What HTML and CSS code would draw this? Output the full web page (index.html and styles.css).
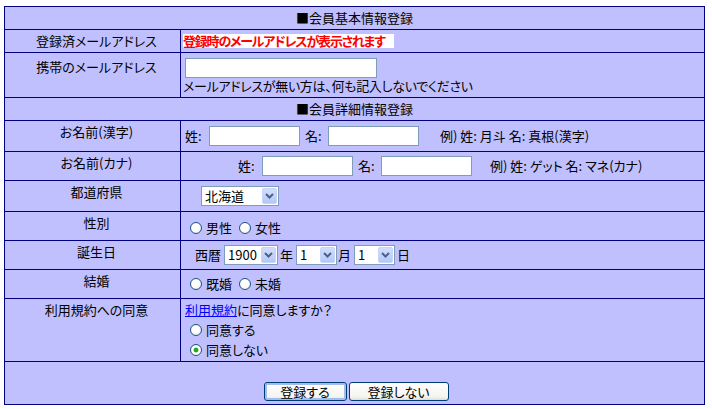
FILE: index.html
```html
<!DOCTYPE html>
<html lang="ja">
<head>
<meta charset="utf-8">
<title>会員登録</title>
<link rel="stylesheet" href="styles.css">
</head>
<body>
<form class="page">
<table class="form">
  <tr class="h23">
    <td colspan="2" class="head">■会員基本情報登録</td>
  </tr>
  <tr class="h23">
    <td class="lbl">登録済メールアドレス</td>
    <td class="val"><span class="reg-mail">登録時のメールアドレスが表示されます</span></td>
  </tr>
  <tr class="h45">
    <td class="lbl lbl-low">携帯のメールアドレス</td>
    <td class="val val-top">
      <input class="txt txt-mail" type="text">
      <div class="note">メールアドレスが無い方は、何も記入しないでください</div>
    </td>
  </tr>
  <tr class="h23">
    <td colspan="2" class="head">■会員詳細情報登録</td>
  </tr>
  <tr class="h31">
    <td class="lbl">お名前(漢字)</td>
    <td class="val">
      <div class="line kanji">
        <span class="nm">姓:</span><input class="txt txt-name" type="text">
        <span class="nm nm2">名:</span><input class="txt txt-name" type="text">
        <span class="ex ex-kanji">例) 姓: 月斗 名: 真根(漢字)</span>
      </div>
    </td>
  </tr>
  <tr class="h29">
    <td class="lbl">お名前(カナ)</td>
    <td class="val">
      <div class="line kana">
        <span class="nm">姓:</span><input class="txt txt-name" type="text">
        <span class="nm nm2">名:</span><input class="txt txt-name" type="text">
        <span class="ex ex-kana">例) 姓: ゲット 名: マネ(カナ)</span>
      </div>
    </td>
  </tr>
  <tr class="h31">
    <td class="lbl">都道府県</td>
    <td class="val">
      <div class="line">
        <span class="sel sel-pref"><select><option>北海道</option></select><span class="sel-btn"><svg width="9" height="6" viewBox="0 0 9 6"><path d="M1 1 L4.5 4.5 L8 1" fill="none" stroke="#4d6185" stroke-width="2"/></svg></span></span>
      </div>
    </td>
  </tr>
  <tr class="h29">
    <td class="lbl">性別</td>
    <td class="val val-low">
      <div class="line choice">
        <label class="opt"><input type="radio" name="sex">男性</label>
        <label class="opt"><input type="radio" name="sex">女性</label>
      </div>
    </td>
  </tr>
  <tr class="h29">
    <td class="lbl">誕生日</td>
    <td class="val">
      <div class="line birth">
        <span class="era">西暦</span>
        <span class="sel sel-year"><select><option>1900</option></select><span class="sel-btn"><svg width="9" height="6" viewBox="0 0 9 6"><path d="M1 1 L4.5 4.5 L8 1" fill="none" stroke="#4d6185" stroke-width="2"/></svg></span></span>
        <span class="unit">年</span>
        <span class="sel sel-day"><select><option>1</option></select><span class="sel-btn"><svg width="9" height="6" viewBox="0 0 9 6"><path d="M1 1 L4.5 4.5 L8 1" fill="none" stroke="#4d6185" stroke-width="2"/></svg></span></span>
        <span class="unit unit-m">月</span>
        <span class="sel sel-day"><select><option>1</option></select><span class="sel-btn"><svg width="9" height="6" viewBox="0 0 9 6"><path d="M1 1 L4.5 4.5 L8 1" fill="none" stroke="#4d6185" stroke-width="2"/></svg></span></span>
        <span class="unit">日</span>
      </div>
    </td>
  </tr>
  <tr class="h29">
    <td class="lbl">結婚</td>
    <td class="val">
      <div class="line choice">
        <label class="opt"><input type="radio" name="mar">既婚</label>
        <label class="opt"><input type="radio" name="mar">未婚</label>
      </div>
    </td>
  </tr>
  <tr class="h63">
    <td class="lbl">利用規約への同意</td>
    <td class="val">
      <div class="rowline"><a href="#" class="terms">利用規約</a>に同意しますか？</div>
      <div class="rowline choice"><label class="opt"><input type="radio" name="agree">同意する</label></div>
      <div class="rowline choice"><label class="opt"><input type="radio" name="agree" checked>同意しない</label></div>
    </td>
  </tr>
  <tr class="h43">
    <td colspan="2" class="actions">
      <div class="btns">
        <button type="button" class="btn btn-ok">登録する</button>
        <button type="button" class="btn btn-no">登録しない</button>
      </div>
    </td>
  </tr>
</table>
</form>
</body>
</html>
```

FILE: styles.css
```css
html, body {
  margin: 0;
  padding: 0;
  background: #ffffff;
}

body {
  font-family: "Noto Sans CJK JP", "Noto Sans", sans-serif;
  font-size: 13px;
  line-height: 16px;
  font-feature-settings: "palt";
  color: #000;
}

.page {
  margin: 0;
  padding: 6px 0 0 4px;
}

.form {
  border-collapse: collapse;
  width: 701px;
  background: #c0c0ff;
}

.form td {
  border: 1px solid #000080;
  padding: 0;
}

.h23 { height: 23px; }
.h29 { height: 29px; }
.h31 { height: 31px; }
.h45 { height: 45px; }
.h63 { height: 63px; }
.h43 { height: 43px; }

.head {
  text-align: center;
  vertical-align: middle;
}

.lbl {
  width: 167px;
  text-align: center;
  vertical-align: top;
  padding: 3px 0 0 8px !important;
  white-space: nowrap;
}

.lbl-low {
  padding-top: 6px !important;
}

.val {
  vertical-align: middle;
  padding-left: 2px !important;
}

.val-top {
  vertical-align: top;
  padding-top: 5px !important;
}

.val-low {
  padding-top: 3px !important;
}

.reg-mail {
  display: inline-block;
  line-height: 14px;
  background: #ffffff;
  color: #ff0000;
  font-weight: bold;
  letter-spacing: -1.2px;
  padding-right: 9px;
}

.txt {
  box-sizing: border-box;
  height: 20px;
  border: 1px solid #7f9db9;
  background: #fff;
  padding: 0 2px;
  margin: 0;
  font: inherit;
  vertical-align: middle;
}

.txt-mail {
  display: block;
  width: 192px;
  margin-left: 2px;
}

.note {
  line-height: 16px;
  letter-spacing: -0.3px;
}

.line {
  display: flex;
  align-items: center;
  height: 20px;
}

.nm {
  display: inline-block;
  width: 24px;
}

.nm2 {
  width: 23px;
  margin-left: 5px;
}

.kanji .nm:first-child { margin-left: 2px; }
.kana .nm:first-child { margin-left: 55px; }

.txt-name {
  width: 91px;
}

.ex { white-space: pre; }
.ex-kanji { margin-left: 21px; }
.ex-kana { margin-left: 18px; }

.sel {
  box-sizing: border-box;
  display: inline-flex;
  align-items: stretch;
  height: 20px;
  border: 1px solid #7f9db9;
  background: #fff;
}

.sel select {
  appearance: none;
  -webkit-appearance: none;
  border: 0;
  margin: 0;
  padding: 0 0 0 3px;
  background: transparent;
  font: inherit;
  color: #000;
  flex: 1;
  min-width: 0;
  outline: none;
}

.sel-btn {
  box-sizing: border-box;
  width: 15px;
  margin: 1px;
  border: 1px solid #c5d5fc;
  border-radius: 2px;
  background: linear-gradient(#d3defd, #b4c8f7);
  display: flex;
  align-items: center;
  justify-content: center;
}

.sel-pref { width: 78px; margin-left: 18px; }
.sel-year { width: 54px; margin-left: 3px; }
.sel-day { width: 41px; margin-left: 3px; }

.era { margin-left: 12px; }
.unit { margin-left: 2px; }
.unit-m { margin-left: 1px; }

.choice .opt {
  display: inline-flex;
  align-items: center;
  margin-right: 0;
}

.opt input[type="radio"] {
  appearance: none;
  -webkit-appearance: none;
  box-sizing: border-box;
  width: 12px;
  height: 12px;
  margin: 0 4px 0 7px;
  border: 1px solid #1c5180;
  border-radius: 50%;
  background: radial-gradient(circle at 40% 40%, #ffffff 40%, #e3e3dc 100%);
}

.opt input[type="radio"]:checked {
  background: radial-gradient(circle, #2fb12f 0, #21a121 2px, #ffffff 2.8px, #f3f3ee 100%);
}

.rowline {
  height: 20px;
  line-height: 20px;
  display: flex;
  align-items: center;
}

.terms {
  color: #0000ff;
  text-decoration: underline;
  margin-left: 2px;
}

.actions {
  vertical-align: top;
  padding-top: 20px !important;
}

.btns {
  display: flex;
  justify-content: center;
  gap: 2px;
  padding-left: 3px;
}

.btn {
  box-sizing: border-box;
  height: 19px;
  padding: 0;
  border: 1px solid #003c74;
  border-radius: 3px;
  background: linear-gradient(#ffffff, #f4f4f0 80%, #e3e3db);
  font: inherit;
  line-height: 15px;
  color: #000;
}

.btn-ok {
  width: 83px;
  box-shadow: inset 0 0 0 2px #a2bdeb;
}

.btn-no {
  width: 100px;
  box-shadow: inset 0 -1px 0 #f2d4e4;
}
```
